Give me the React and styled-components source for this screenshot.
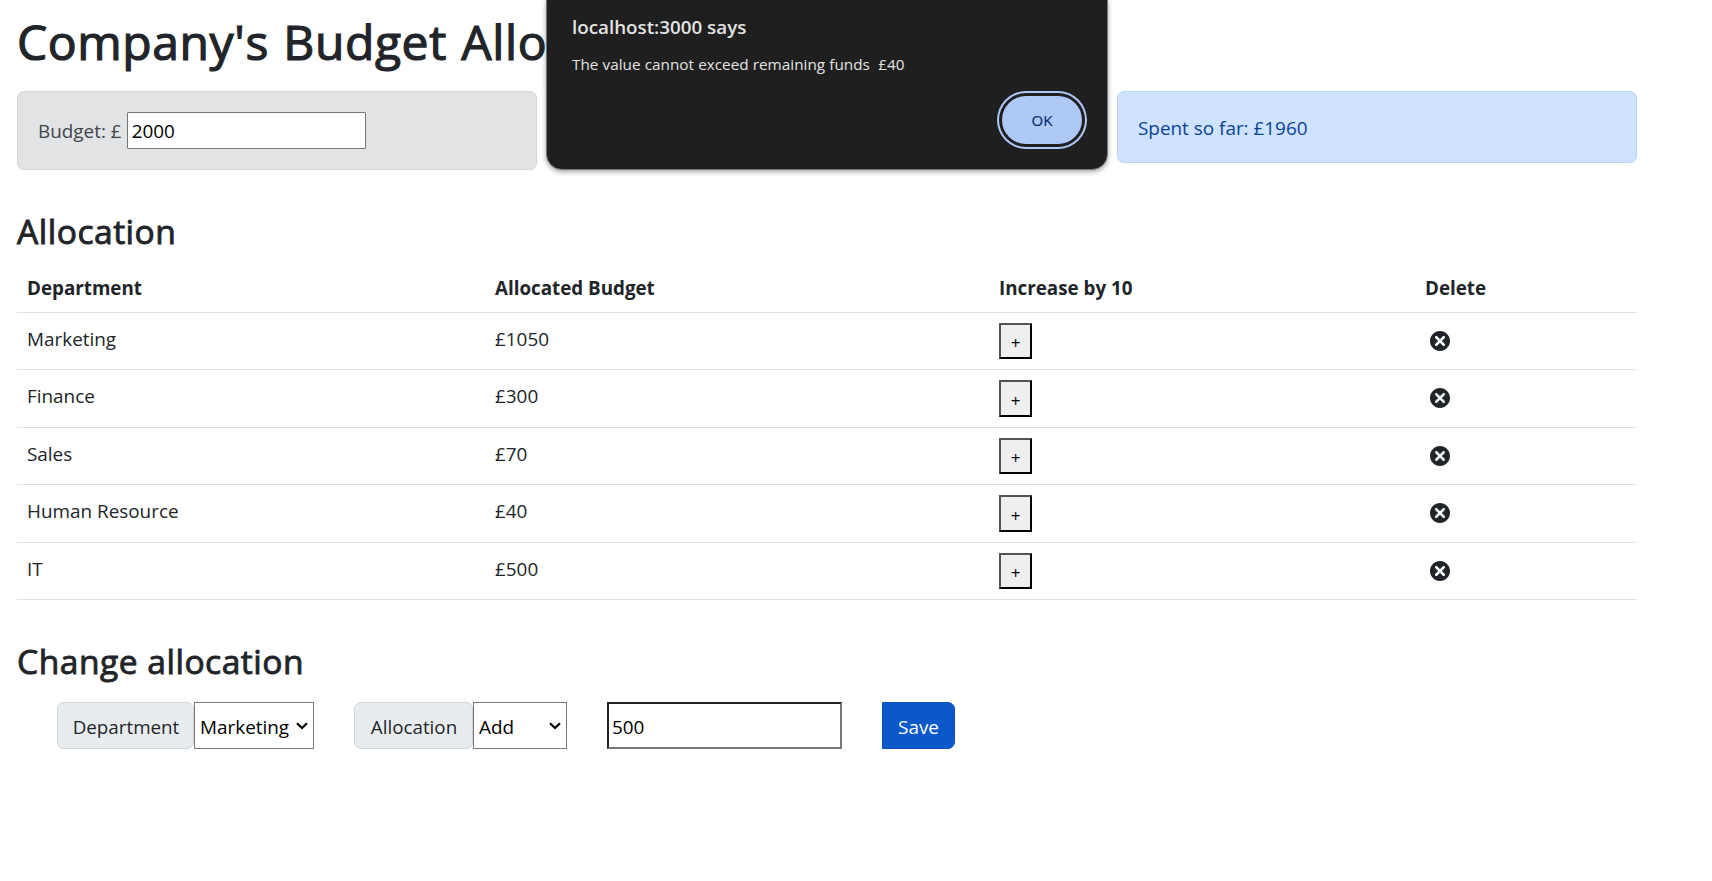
import React, { useState } from 'react';
import styled, { createGlobalStyle, css } from 'styled-components';
import { TiDelete } from 'react-icons/ti';

const GlobalStyle = createGlobalStyle`
  *, *::before, *::after { box-sizing: border-box; }
  body {
    margin: 0;
    background: #fff;
    color: #212529;
    font-family: 'Open Sans', 'Noto Sans', sans-serif;
    font-size: 18.9px;
    line-height: 30px;
    overflow: hidden;
  }
`;

const Container = styled.main`
  width: 1620px;
  margin-left: 17px;
  padding-top: 12px;
`;

const Title = styled.h1`
  margin: 0 0 19px;
  font-size: 48px;
  line-height: 60px;
  font-weight: 400;
  letter-spacing: 0.6px;
  word-spacing: 1.4px;
  -webkit-text-stroke: 1.2px currentColor;
  white-space: nowrap;
`;

const SectionTitle = styled.h3`
  margin: 0 0 10px;
  font-size: 33.6px;
  line-height: 42px;
  font-weight: 400;
  letter-spacing: 0.5px;
  -webkit-text-stroke: 0.9px currentColor;
`;

const Summary = styled.div`
  display: grid;
  grid-template-columns: repeat(3, 520px);
  gap: 30px;
  align-items: start;
  margin-bottom: 40px;
`;

const alertTones = {
  secondary: css`
    color: #41464b;
    background: #e2e3e5;
    border-color: #d3d6d8;
  `,
  success: css`
    color: #0f5132;
    background: #d1e7dd;
    border-color: #badbcc;
  `,
  primary: css`
    color: #084298;
    background: #cfe2ff;
    border-color: #b6d4fe;
  `,
};

const Alert = styled.div`
  display: flex;
  align-items: center;
  padding: ${({ $tone }) => ($tone === 'secondary' ? '20px' : '21px 20px 19px')};
  border: 1px solid;
  border-radius: 7px;
  white-space: pre;
  ${({ $tone }) => alertTones[$tone]}
`;

const BudgetInput = styled.input`
  width: 239px;
  height: 37px;
  margin-left: 5px;
  padding: 1px 4px;
  border: 1px solid #767676;
  border-radius: 1px;
  background: #fff;
  color: #000;
  font: inherit;
  outline: none;
`;

const Table = styled.table`
  width: 1620px;
  margin-bottom: 40px;
  table-layout: fixed;
  border-collapse: separate;
  border-spacing: 0;
`;

const HeadCell = styled.th`
  width: ${({ $width }) => $width}px;
  height: 51px;
  padding: 11px 10px 9px;
  border-bottom: 1px solid #dee2e6;
  text-align: left;
  font-weight: 700;
  font-size: 18.8px;
`;

const Row = styled.tr`
  height: 57px;
  &:nth-child(even) { height: 58px; }
`;

const Cell = styled.td`
  padding: ${({ $control }) => ($control ? 10 : 11)}px 10px 0;
  border-bottom: 1px solid #dee2e6;
  vertical-align: top;
  line-height: 30px;
`;

const IncreaseButton = styled.button`
  display: block;
  width: 33px;
  height: 36px;
  padding: 4px 0 0;
  border: 2px outset #000;
  background: #efefef;
  color: #000;
  font: inherit;
  font-size: 17px;
  line-height: 28px;
  ${Row}:nth-child(even) & { height: 37px; }
`;

const DeleteIcon = styled(TiDelete)`
  display: block;
  margin-top: 3px;
`;

const Form = styled.form`
  display: flex;
  gap: 40px;
  height: 47px;
  margin: 20px 0 0 40px;
`;

const InputGroup = styled.div`
  display: flex;
`;

const GroupLabel = styled.label`
  display: flex;
  align-items: center;
  justify-content: center;
  width: ${({ $width }) => $width}px;
  padding: 3px 0 0 1px;
  border: 1px solid #ced4da;
  border-radius: 7px;
  background: #e9ecef;
  font-size: 18.8px;
`;

const SelectBox = styled.div`
  display: flex;
  align-items: center;
  width: ${({ $width }) => $width}px;
  border: 1px solid #767676;
  background: #fff;
  color: #000;
`;

const Select = styled.select`
  flex: 1;
  min-width: 0;
  height: 100%;
  padding: 3px 0 0 5px;
  border: 0;
  background: transparent;
  color: #000;
  font: inherit;
  appearance: none;
  outline: none;
`;

const Chevron = styled.svg`
  flex: none;
  width: 12px;
  height: 8px;
  margin-right: 5px;
`;

const AmountInput = styled.input`
  width: 235px;
  padding: 3px 3px 0;
  border: 2px solid;
  border-color: #212121 #767676 #767676 #212121;
  background: #fff;
  color: #000;
  font: inherit;
  outline: none;
`;

const SaveButton = styled.button`
  width: 73px;
  padding: 3px 0 0;
  border: 1px solid #0a53be;
  border-radius: 0 7px 7px 0;
  background: #0a58ca;
  color: #fff;
  font: inherit;
`;

const Dialog = styled.div`
  position: absolute;
  top: -1px;
  left: 546px;
  display: flex;
  flex-direction: column;
  width: 562px;
  height: 171px;
  padding: 12px 25px 25px;
  border: 1px solid #777;
  border-radius: 0 0 16px 16px;
  background: #1f1f1f;
  color: #e3e3e3;
  box-shadow: 0 2px 5px rgba(0, 0, 0, 0.35);
`;

const DialogTitle = styled.div`
  font-size: 18.8px;
  font-weight: 600;
  line-height: 30px;
`;

const DialogMessage = styled.div`
  margin-top: 10px;
  font-size: 15.3px;
  line-height: 24px;
  word-spacing: 0.2px;
  white-space: pre;
`;

const OkButton = styled.button`
  width: 80px;
  height: 48px;
  margin: auto 0 0 auto;
  padding: 0 0 1px;
  border: 0;
  border-radius: 24px;
  background: #afc9f7;
  color: #062e6f;
  font: inherit;
  font-size: 15px;
  -webkit-text-stroke: 0.2px currentColor;
  box-shadow: 0 0 0 3px #1f1f1f, 0 0 0 5px #afc9f7;
`;

const initialDepartments = [
  { name: 'Marketing', amount: 1050 },
  { name: 'Finance', amount: 300 },
  { name: 'Sales', amount: 70 },
  { name: 'Human Resource', amount: 40 },
  { name: 'IT', amount: 500 },
];

function SelectField({ id, width, options }) {
  return (
    <SelectBox $width={width}>
      <Select id={id}>
        {options.map((o) => <option key={o}>{o}</option>)}
      </Select>
      <Chevron viewBox="0 0 12 8" fill="none">
        <path d="M1 1.2 6 6l5-4.8" stroke="#000" strokeWidth="2.2" />
      </Chevron>
    </SelectBox>
  );
}

export default function App() {
  const [departments, setDepartments] = useState(initialDepartments);
  const spent = departments.reduce((sum, d) => sum + d.amount, 0);

  const increase = (name) =>
    setDepartments((list) => list.map((d) => (d.name === name ? { ...d, amount: d.amount + 10 } : d)));
  const clear = (name) =>
    setDepartments((list) => list.map((d) => (d.name === name ? { ...d, amount: 0 } : d)));

  return (
    <>
      <GlobalStyle />
      <Container>
        <Title>Company's Budget Allocation</Title>
        <Summary>
          <Alert $tone="secondary">
            <span>Budget: £</span>
            <BudgetInput defaultValue="2000" />
          </Alert>
          <Alert $tone="success">Remaining: £{2000 - spent}</Alert>
          <Alert $tone="primary">Spent so far: £{spent}</Alert>
        </Summary>

        <SectionTitle>Allocation</SectionTitle>
        <Table>
          <thead>
            <tr>
              <HeadCell $width={468}>Department</HeadCell>
              <HeadCell $width={504}>Allocated Budget</HeadCell>
              <HeadCell $width={426}>Increase by 10</HeadCell>
              <HeadCell $width={222}>Delete</HeadCell>
            </tr>
          </thead>
          <tbody>
            {departments.map(({ name, amount }) => (
              <Row key={name}>
                <Cell>{name}</Cell>
                <Cell>£{amount}</Cell>
                <Cell $control><IncreaseButton onClick={() => increase(name)}>+</IncreaseButton></Cell>
                <Cell $control><DeleteIcon size={30} onClick={() => clear(name)} /></Cell>
              </Row>
            ))}
          </tbody>
        </Table>

        <SectionTitle>Change allocation</SectionTitle>
        <Form onSubmit={(e) => e.preventDefault()}>
          <InputGroup>
            <GroupLabel htmlFor="department" $width={137}>Department</GroupLabel>
            <SelectField id="department" width={120} options={departments.map((d) => d.name)} />
          </InputGroup>
          <InputGroup>
            <GroupLabel htmlFor="action" $width={119}>Allocation</GroupLabel>
            <SelectField id="action" width={94} options={['Add', 'Reduce']} />
          </InputGroup>
          <AmountInput defaultValue="500" />
          <SaveButton>Save</SaveButton>
        </Form>
      </Container>

      <Dialog role="alertdialog">
        <DialogTitle>localhost:3000 says</DialogTitle>
        <DialogMessage>The value cannot exceed remaining funds  £40</DialogMessage>
        <OkButton>OK</OkButton>
      </Dialog>
    </>
  );
}
